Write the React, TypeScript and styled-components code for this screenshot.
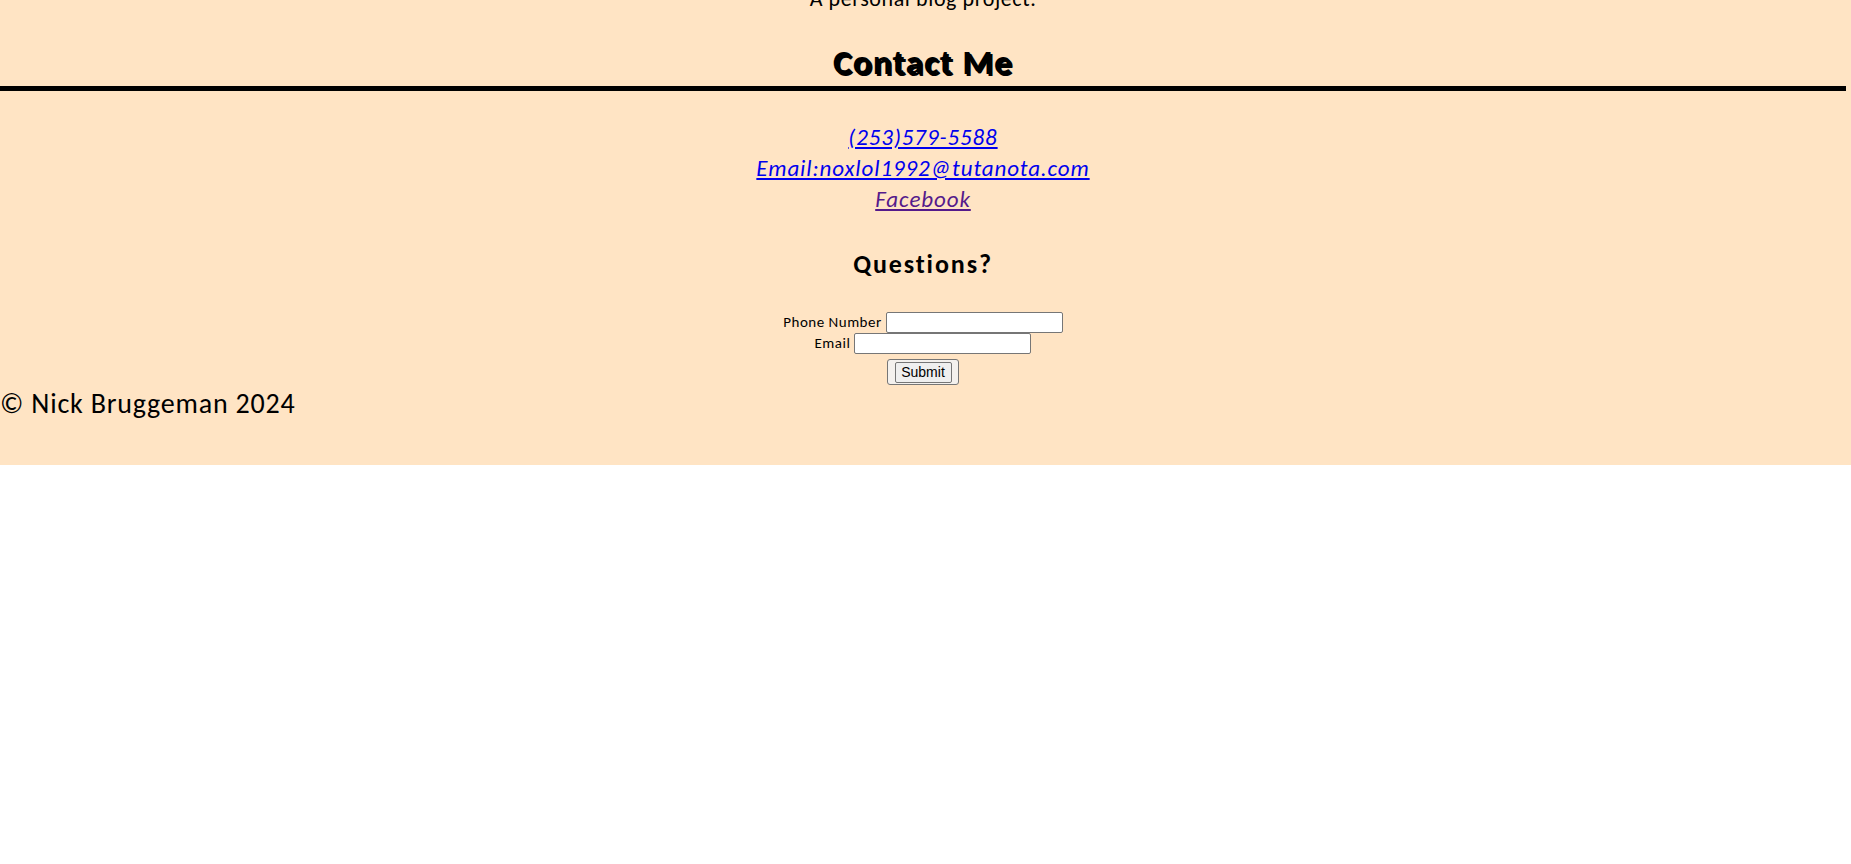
import React from "react";
import styled, { createGlobalStyle } from "styled-components";

const GlobalStyle = createGlobalStyle`
  html, body {
    margin: 0;
    padding: 0;
    background: #ffffff;
  }
`;

const Page = styled.div`
  background: #ffe4c4;
  font-family: Carlito, Lato, "Open Sans", sans-serif;
  color: #000;
  padding: 0 5px 43px 0;
  overflow: hidden;
`;

const Tagline = styled.p`
  margin: -14px 0 0;
  font-size: 22px;
  line-height: 26px;
  letter-spacing: 0.6px;
  text-align: center;
`;

const ContactHeading = styled.h2`
  margin: 30px 0 0;
  font-size: 35px;
  line-height: 40px;
  font-weight: 700;
  letter-spacing: 1.2px;
  text-align: center;
  text-shadow: 2px 2px 0 #000;
  border-bottom: 5px solid #000;
  padding-bottom: 4px;
`;

const LinkList = styled.div`
  display: flex;
  flex-direction: column;
  align-items: center;
  margin-top: 31px;
`;

const ContactLink = styled.a<{ $visited?: boolean }>`
  font-size: 23px;
  line-height: 31px;
  font-style: italic;
  letter-spacing: 0.9px;
  color: ${(p) => (p.$visited ? "#551a8b" : "#0000ee")};
  text-decoration: underline;
`;

const QuestionsHeading = styled.h3`
  margin: 33px 0 0;
  font-size: 26px;
  line-height: 32px;
  font-weight: 700;
  letter-spacing: 1.9px;
  text-align: center;
`;

const Form = styled.form`
  display: flex;
  flex-direction: column;
  align-items: center;
  margin-top: 32px;
`;

const FieldRow = styled.div`
  display: flex;
  align-items: center;
  justify-content: center;
  gap: 4px;
  height: 21px;
`;

const FieldLabel = styled.label`
  font-size: 15px;
  line-height: 21px;
  letter-spacing: 0.5px;
`;

const TextInput = styled.input`
  box-sizing: border-box;
  width: 177px;
  height: 21px;
  border: 1px solid #767676;
  border-radius: 2px;
  background: #fff;
  padding: 1px 2px;
  font: 13.33px Arial, "Liberation Sans", sans-serif;
`;

const SubmitFrame = styled.div`
  box-sizing: border-box;
  margin-top: 5px;
  width: 72px;
  height: 26px;
  display: flex;
  align-items: center;
  justify-content: center;
  border: 1px solid #767676;
  border-radius: 3px;
  background: #f4f1ee;
`;

const SubmitButton = styled.button`
  box-sizing: border-box;
  width: 57px;
  height: 21px;
  padding: 0;
  border: 1px solid #767676;
  border-radius: 2px;
  background: #efefef;
  color: #000;
  font: 14px Arial, "Liberation Sans", sans-serif;
`;

const Footer = styled.footer`
  margin-top: 1px;
  font-size: 28px;
  line-height: 36px;
  letter-spacing: 0.8px;
  text-align: left;
`;

export default function App() {
  return (
    <>
      <GlobalStyle />
      <Page>
        <Tagline>A personal blog project.</Tagline>
        <ContactHeading>Contact Me</ContactHeading>
        <LinkList>
          <ContactLink href="#phone">(253)579-5588</ContactLink>
          <ContactLink href="#email">Email:noxlol1992@tutanota.com</ContactLink>
          <ContactLink href="#facebook" $visited>
            Facebook
          </ContactLink>
        </LinkList>
        <QuestionsHeading>Questions?</QuestionsHeading>
        <Form onSubmit={(e) => e.preventDefault()}>
          <FieldRow>
            <FieldLabel htmlFor="phone">Phone Number</FieldLabel>
            <TextInput id="phone" type="text" />
          </FieldRow>
          <FieldRow>
            <FieldLabel htmlFor="email">Email</FieldLabel>
            <TextInput id="email" type="text" />
          </FieldRow>
          <SubmitFrame>
            <SubmitButton type="submit">Submit</SubmitButton>
          </SubmitFrame>
        </Form>
        <Footer>© Nick Bruggeman 2024</Footer>
      </Page>
    </>
  );
}
